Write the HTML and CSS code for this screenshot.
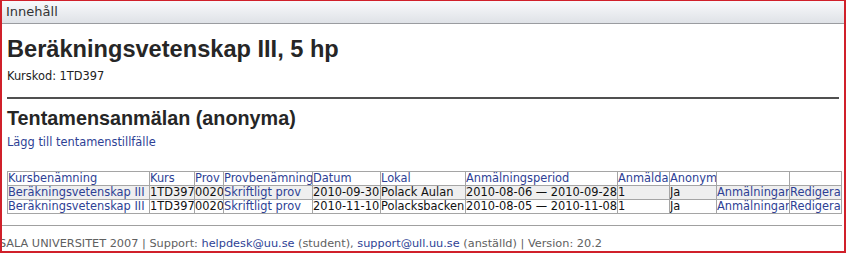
FILE: index.html
```html
<!DOCTYPE html>
<html>
<head>
<meta charset="utf-8">
<link rel="stylesheet" href="styles.css">
</head>
<body>
<div class="frame">
  <div class="bar">Innehåll</div>
  <div class="content">
    <h1 class="title">Beräkningsvetenskap III, 5 hp</h1>
    <div class="code">Kurskod: 1TD397</div>
    <div class="rule"></div>
    <h2 class="subtitle">Tentamensanmälan (anonyma)</h2>
    <a class="link addlink" href="#">Lägg till tentamenstillfälle</a>
    <table class="grid">
      <colgroup>
        <col class="c1"><col class="c2"><col class="c3"><col class="c4"><col class="c5"><col class="c6"><col class="c7"><col class="c8"><col class="c9"><col class="c10"><col class="c11">
      </colgroup>
      <thead>
        <tr>
          <th><a class="link" href="#">Kursbenämning</a></th>
          <th><a class="link" href="#">Kurs</a></th>
          <th><a class="link" href="#">Prov</a></th>
          <th><a class="link" href="#">Provbenämning</a></th>
          <th><a class="link" href="#">Datum</a></th>
          <th><a class="link" href="#">Lokal</a></th>
          <th><a class="link" href="#">Anmälningsperiod</a></th>
          <th><a class="link" href="#">Anmälda</a></th>
          <th><a class="link" href="#">Anonym</a></th>
          <th></th>
          <th></th>
        </tr>
      </thead>
      <tbody>
        <tr class="odd">
          <td><a class="link" href="#">Beräkningsvetenskap III</a></td>
          <td>1TD397</td>
          <td>0020</td>
          <td><a class="link" href="#">Skriftligt prov</a></td>
          <td>2010-09-30</td>
          <td>Polack Aulan</td>
          <td>2010-08-06 — 2010-09-28</td>
          <td>1</td>
          <td>Ja</td>
          <td><a class="link" href="#">Anmälningar</a></td>
          <td><a class="link" href="#">Redigera</a></td>
        </tr>
        <tr>
          <td><a class="link" href="#">Beräkningsvetenskap III</a></td>
          <td>1TD397</td>
          <td>0020</td>
          <td><a class="link" href="#">Skriftligt prov</a></td>
          <td>2010-11-10</td>
          <td>Polacksbacken</td>
          <td>2010-08-05 — 2010-11-08</td>
          <td>1</td>
          <td>Ja</td>
          <td><a class="link" href="#">Anmälningar</a></td>
          <td><a class="link" href="#">Redigera</a></td>
        </tr>
      </tbody>
    </table>
  </div>
  <div class="footer">
    <div class="foot-text">UPPSALA UNIVERSITET 2007 | Support: <a class="link" href="#">helpdesk@uu.se</a> (student), <a class="link" href="#">support@ull.uu.se</a> (anställd) | Version: 20.2</div>
  </div>
</div>
</body>
</html>
```

FILE: styles.css
```css
html, body {
  margin: 0;
  padding: 0;
  background: #ffffff;
}

body {
  font-family: "DejaVu Sans", Verdana, sans-serif;
  font-size: 11.4px;
  color: #222222;
  overflow: hidden;
}

.frame {
  box-sizing: border-box;
  width: 846px;
  height: 253px;
  border-top: 1px solid #d0202a;
  border-left: 2px solid #d0202a;
  border-right: 2px solid #d0202a;
  border-bottom: 2px solid #d0202a;
  overflow: hidden;
  display: flex;
  flex-direction: column;
}

.bar {
  height: 23px;
  line-height: 22px;
  border-bottom: 1px solid #9a9ca0;
  background: linear-gradient(#f8f9fb, #dfe2e7);
  font-size: 13px;
  color: #333333;
  padding-left: 4px;
}

.content {
  padding: 0 5px;
}

.title {
  font-family: "Liberation Sans", Arial, sans-serif;
  font-weight: bold;
  font-size: 23.6px;
  line-height: 28px;
  margin: 11px 0 0 0;
  color: #262626;
}

.code {
  line-height: 14px;
  margin-top: 6px;
  color: #222222;
}

.rule {
  height: 2px;
  background: #505050;
  margin: 14px 0 0 0;
}

.subtitle {
  font-family: "Liberation Sans", Arial, sans-serif;
  font-weight: bold;
  font-size: 19.8px;
  line-height: 24px;
  margin: 7px 0 0 0;
  color: #262626;
}

.link {
  color: #2e3f95;
  text-decoration: none;
}

.addlink {
  display: block;
  line-height: 14px;
  margin-top: 5px;
}

.grid {
  border-collapse: collapse;
  table-layout: fixed;
  width: 834px;
  margin-top: 22px;
  font-size: 11.4px;
}

.grid th, .grid td {
  border: 1px solid #a5a5a5;
  padding: 0;
  height: 13px;
  line-height: 13px;
  text-align: left;
  font-weight: normal;
  white-space: nowrap;
  overflow: hidden;
}

.grid td {
  color: #111111;
}

.grid .odd td {
  background: #efefef;
}

.c1 { width: 142px; }
.c2 { width: 45px; }
.c3 { width: 29px; }
.c4 { width: 89px; }
.c5 { width: 68px; }
.c6 { width: 85px; }
.c7 { width: 152px; }
.c8 { width: 52px; }
.c9 { width: 47px; }
.c10 { width: 73px; }
.c11 { width: 52px; }

.footer {
  margin-top: 11px;
  border-top: 1px solid #a0a0a0;
  width: 840px;
}

.foot-text {
  margin-left: -25px;
  padding-top: 11px;
  line-height: 14px;
  font-size: 11.3px;
  color: #606060;
  white-space: nowrap;
}
```
